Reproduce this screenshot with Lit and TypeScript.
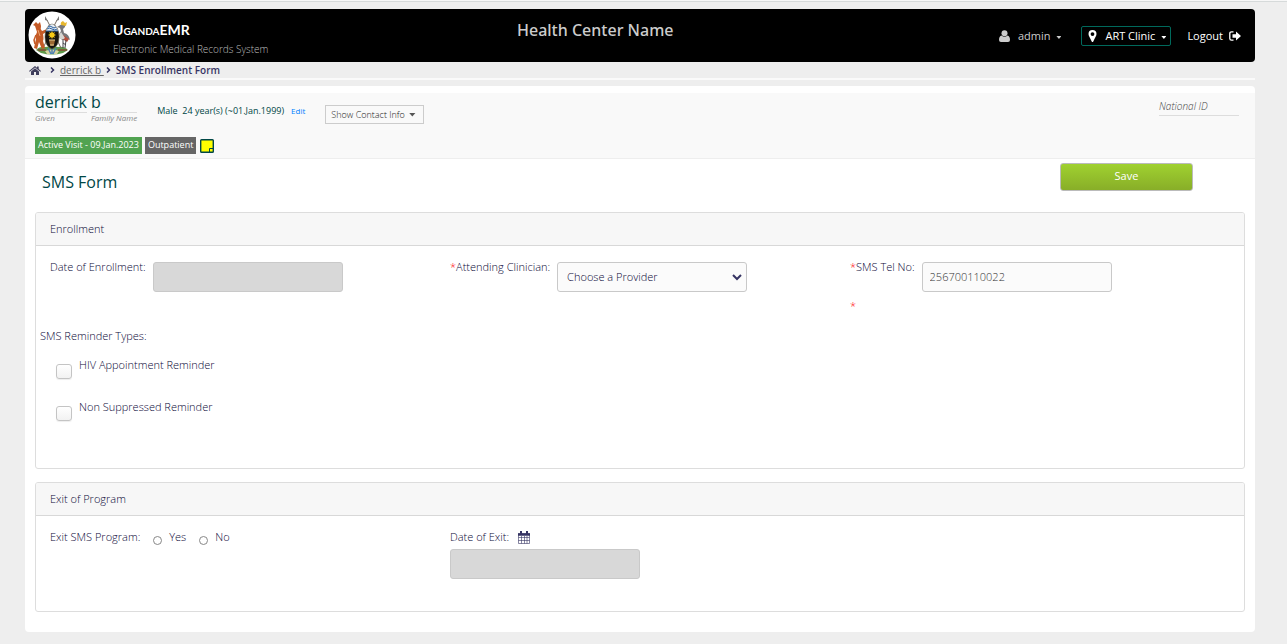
import { LitElement, html, css, svg } from "lit";
import { customElement, property } from "lit/decorators.js";

const coatOfArms = svg`
  <circle cx="24" cy="24" r="23.5" fill="#fff"/>
  <path d="M8 39q4-4 10-3 6-2 12 0 6-1 10 3l-5 3q-11 3-22 0z" fill="#5f9a4a"/>
  <path d="M17 40q7-3 14 0l-2 3H19z" fill="#d9d4a0"/>
  <path d="M20 37l3 6M24 36v7M28 37l-3 6" stroke="#4f80b4" stroke-width="1.5"/>
  <path d="M10 39h8M30 39h9" stroke="#8b4a35" stroke-width="1.5"/>
  <path d="M15 37L29 9M33 37L19 9" stroke="#776b60" stroke-width="1"/>
  <path d="M17 5l3 5-3-1zM31 5l-3 5 3-1z" fill="#777"/>
  <path d="M8 11l2 2 2-2 1 4q-1 3 1 5l5-2 1 2-5 3q1 5 0 7l2 7-3 1-3-7-2 7-3-1 2-9q-1-4 1-7l-2-6-2-1z" fill="#c55b27"/>
  <path d="M8 24l-2 5 1 4" stroke="#c55b27" stroke-width="1.5" fill="none"/>
  <path d="M10 19l2 6" stroke="#eba16b" stroke-width="1"/>
  <path d="M34 13q4-1 3 3l-2 2 1 4q5 1 6 7l-4-2-4 2-4-4 3-5-1-3-3-1z" fill="#77777a"/>
  <path d="M33 14q-1-3 2-4l2 2 2-1-1 4" fill="#e7b72e"/>
  <path d="M35 24l6 4-2 3-6-4z" fill="#b64d3a"/>
  <path d="M33 21l-3 5 4 3 3-2z" fill="#d5d5d1"/>
  <path d="M35 28v9M38 29l-1 8M35 32l3 2" stroke="#454348" stroke-width="1"/>
  <path d="M24 13q7 2 7 13 0 9-7 12-7-3-7-12 0-11 7-13z" fill="#16140f" stroke="#57503b" stroke-width=".6"/>
  <path d="M18 20q1-5 6-7 5 2 6 7z" fill="#e6edf4"/>
  <path d="M19 18q2-2 5 0t5 0M20 16q2-2 4 0t4 0M18 20h12" stroke="#295f9e" stroke-width="1" fill="none"/>
  <path d="M24 20l1 2 2-1-1 2 2 1-2 1 1 2-2-1-1 2-1-2-2 1 1-2-2-1 2-1-1-2 2 1z" fill="#f5c916"/>
  <path d="M21 29h6l-1 5q-2 2-4 0z" fill="#9b6831"/>
  <path d="M21 29h6M22 34h4" stroke="#e2c991" stroke-width="1"/>
`;

@customElement("form-panel")
class FormPanel extends LitElement {
  @property() heading = "";

  static styles = css`
    :host { display: block; border: 1px solid #ddd; border-radius: 3px; background: #fff; }
    .heading {
      margin: 0; padding: 0 14px; height: 32px; line-height: 32px;
      font-size: 11px; font-weight: inherit; background: #f7f7f7;
      border-bottom: 1px solid #d8d8d8; border-radius: 2px 2px 0 0;
    }
    .body { padding: 16px 4px 0; }
  `;

  render() {
    return html`<h2 class="heading">${this.heading}</h2><div class="body"><slot></slot></div>`;
  }
}

@customElement("app-root")
class AppRoot extends LitElement {
  static styles = css`
    * { box-sizing: border-box; }
    :host {
      display: block; min-height: 100vh; background: #eee;
      border-top: 1px solid #f7f7f7; box-sizing: border-box;
      font-family: "Open Sans", "Noto Sans", sans-serif;
      font-size: 11px; line-height: 14px; color: #363463;
    }
    a { color: inherit; text-decoration: none; }
    button, input, select { font: inherit; color: inherit; margin: 0; }
    svg { display: block; flex: none; }
    .page { border-top: 1px solid #d6dada; padding: 7px 32px 12px 25px; }

    .topbar {
      display: grid; grid-template-columns: 40% auto 1fr; height: 53px;
      background: #000; color: #fff; border-radius: 4px;
    }
    .brand { display: flex; gap: 37px; padding: 2px 3px; }
    .brand-text { padding-top: 10px; }
    .brand-name {
      margin: 0; font-family: Lato, sans-serif; font-size: 14px; line-height: 18px;
      font-weight: 700; font-variant: small-caps;
    }
    .tagline { margin: 0; padding-top: 3px; font-size: 10px; line-height: 14px; font-weight: 300; color: #bbb; }
    .facility { margin: 0; padding-top: 10px; font-size: 16px; line-height: 22px; font-weight: 500; font-family: "Noto Sans", sans-serif; color: #ccc; }
    .session { display: flex; justify-content: flex-end; align-items: center; padding-right: 14px; }
    .link-button { display: flex; align-items: center; gap: 8px; padding: 0; border: 0; background: none; color: #ccc; }
    .location {
      display: flex; align-items: center; gap: 8px; height: 20px; margin: 0 16px 0 20px;
      padding: 0 4px 0 6px; background: none; border: 1px solid #00695c; border-radius: 2px; color: #fff;
    }
    .caret { width: 5px; height: 3px; margin-top: 4px; background: currentColor; clip-path: polygon(0 0, 100% 0, 50% 100%); }
    .with-caret { display: flex; align-items: center; gap: 6px; }
    .logout { display: flex; align-items: center; gap: 6px; }

    .crumbs {
      display: flex; align-items: center; height: 18px; padding-left: 4px;
      font-size: 10px; border-bottom: 2px solid #fafafa;
    }
    .chevron { margin: 0 5px 0 9px; }
    .chevron.near { margin: 0 5px 0 2px; }
    .crumb-link { color: #666; text-decoration: underline; white-space: pre; }
    .current { font-weight: 600; }

    .content { margin-top: 6px; padding: 7px 0 20px; background: #fff; border-radius: 4px; }
    .patient { height: 66px; padding: 0 16px 0 10px; background: #f9f9f9; border-bottom: 1px solid #eee; color: #004746; }
    .identity { display: flex; align-items: flex-start; height: 44px; }
    .names { display: flex; gap: 4px; }
    .name { display: grid; font-size: 16px; line-height: 19px; }
    .name small { border-top: 1px solid #ddd; font-size: 8px; line-height: 9px; font-style: italic; color: #888; }
    .demographics { margin: 0 0 0 20px; padding-top: 11px; font-size: 9px; white-space: pre; }
    .edit { margin-left: 7px; padding-top: 11px; font-size: 8px; color: #007fff; }
    .contact {
      display: flex; align-items: center; gap: 4px; height: 19px; margin: 12px 0 0 20px; padding: 0 7px 0 5px;
      background: transparent; border: 1px solid #ccc; font-size: 9px; font-weight: 300; color: #222;
    }
    .contact .caret { width: 7px; height: 4px; margin: 0; background: #555; }
    .national { width: 80px; margin-left: auto; padding: 6px 0 2px; border-bottom: 1px solid #ddd; font-size: 10px; font-style: italic; font-weight: 300; color: #444; }
    .badges { display: flex; gap: 3px; align-items: center; }
    .badge { height: 17px; padding: 0 3px; line-height: 16px; font-size: 9px; color: #fff; background: #666; }
    .badge.active { background: #51a351; }
    .note { margin-left: 1px; padding: 0; border: 0; background: none; }

    .title-row { display: flex; justify-content: space-between; align-items: flex-start; height: 53px; padding: 4px 62px 0 17px; }
    .title { margin: 0; padding-top: 8px; font-size: 16px; line-height: 22px; font-weight: 400; color: #004746; }
    .save {
      width: 133px; height: 28px; padding: 0 0 2px; border: 1px solid #bbb; border-radius: 3px;
      background: linear-gradient(#a0d130, #88ae28); color: #fff; font-weight: 500;
    }
    .panels { display: grid; gap: 13px; padding: 0 10px; font-weight: 300; color: #0b0838; }
    .enrollment { min-height: 257px; }
    .exit { min-height: 130px; }
    .columns { display: grid; grid-template-columns: repeat(3, 1fr); }
    .field { display: flex; align-items: flex-start; gap: 7px; padding: 0 10px; }
    .field label, .field .label { line-height: 10px; white-space: nowrap; }
    .required { color: #f00; }
    .missing { margin: 0; padding: 7px 10px 0; line-height: 14px; color: #f00; }
    .control { width: 190px; height: 30px; padding: 0 7px; border: 1px solid #c9c9c9; border-radius: 3px; background: #fbfbfb; }
    .control:disabled { background: #d8d8d8; }
    .phone { padding-bottom: 1px; color: #333; }
    .select { position: relative; }
    .select select { appearance: none; padding: 0 20px 0 9px; display: block; }
    .select svg { position: absolute; right: 4px; top: 11px; pointer-events: none; }
    .group { margin: 0; padding: 16px 0 0; border: 0; min-width: 0; }
    .group legend { padding: 0; float: left; width: 100%; line-height: 14px; }
    .options { display: grid; gap: 26px; clear: both; padding: 15px 0 0 16px; }
    .option { display: flex; gap: 7px; height: 16px; }
    .option label { line-height: 14px; }
    .option input {
      appearance: none; width: 16px; height: 15px; margin-top: 6px; flex: none; border: 1px solid #c4c4c4; border-radius: 3px;
      background: linear-gradient(#fff, #f2f2f2); box-shadow: 0 1px 1px #eee;
    }
    .option input:checked { background: #363463; }
    .radios { display: flex; align-items: flex-start; margin-left: 6px; gap: 13px; }
    .radio { display: flex; gap: 7px; }
    .radio input { appearance: none; width: 9px; height: 9px; margin-top: 4px; border: 1px solid #888; border-radius: 50%; background: #fff; }
    .radio input:checked { background: #363463; }
    .date-exit { display: grid; gap: 7px; padding: 0 10px; justify-items: start; }
    .date-label { display: flex; align-items: center; gap: 9px; height: 10px; }
  `;

  private chevron(near = false) {
    return html`<svg class="chevron ${near ? "near" : ""}" width="5" height="8" viewBox="0 0 5 8" fill="none" stroke="#363463" stroke-width="1.5"><path d="M1 1.5l2.500 2.500L1 6.500"/></svg>`;
  }

  render() {
    return html`
      <div class="page">
        <header class="topbar">
          <div class="brand">
            <svg width="48" height="48" viewBox="0 0 48 48" role="img" aria-label="Coat of arms">${coatOfArms}</svg>
            <div class="brand-text">
              <h1 class="brand-name">UgandaEMR</h1>
              <p class="tagline">Electronic Medical Records System</p>
            </div>
          </div>
          <p class="facility">Health Center Name</p>
          <nav class="session">
            <button class="link-button">
              <svg width="11" height="12" viewBox="0 0 11 12" fill="#ccc"><circle cx="5.5" cy="3.2" r="3"/><path d="M2.5 5.5q3 2.4 6 0 2.5.7 2.5 4.5 0 2-2 2H2q-2 0-2-2 0-3.8 2.5-4.5z"/></svg>
              <span class="with-caret">admin <i class="caret"></i></span>
            </button>
            <button class="location">
              <svg width="9" height="12" viewBox="0 0 9 12" fill="#fff"><path fill-rule="evenodd" d="M4.5 0a4 4 0 0 1 4 4c0 2-1.600 3.500-3.200 7.400q-.8 1.200-1.600 0C2.100 7.500.5 6 .5 4a4 4 0 0 1 4-4zm0 2.200a1.900 1.900 0 1 0 0 3.800 1.900 1.900 0 0 0 0-3.800z"/></svg>
              <span class="with-caret">ART Clinic <i class="caret"></i></span>
            </button>
            <a class="logout" href="#">Logout
              <svg width="12" height="10" viewBox="0 0 12 10"><path d="M4.500 .8H2.500Q.8.8.8 2.500v5q0 1.700 1.700 1.700h2" fill="none" stroke="#fff" stroke-width="1.300"/><path d="M3.500 3.200H7V.6L12 5 7 9.400V6.800H3.500z" fill="#fff"/></svg>
            </a>
          </nav>
        </header>

        <nav class="crumbs" aria-label="Breadcrumb">
          <a href="#" aria-label="Home">
            <svg width="12" height="9" viewBox="0 0 12 9" fill="#3f3e5c"><path d="M6 0l2 1.700V.5h1.700v2.600L12 5l-.7.8L6 1.400.7 5.800 0 5z"/><path d="M6 2.200l4 3.300V9H7V6H5v3H2V5.500z"/></svg>
          </a>
          ${this.chevron()}
          <a class="crumb-link" href="#">derrick b </a>
          ${this.chevron(true)}
          <span class="current">SMS Enrollment Form</span>
        </nav>

        <main class="content">
          <section class="patient">
            <div class="identity">
              <div class="names">
                <span class="name">derrick<small>Given</small></span>
                <span class="name">b<small>Family Name</small></span>
              </div>
              <p class="demographics">Male  24 year(s) (~01.Jan.1999)</p>
              <a class="edit" href="#">Edit</a>
              <button class="contact">Show Contact Info <i class="caret"></i></button>
              <span class="national">National ID</span>
            </div>
            <div class="badges">
              <span class="badge active">Active Visit - 09.Jan.2023</span>
              <span class="badge">Outpatient</span>
              <button class="note" aria-label="Sticky note">
                <svg width="14" height="14" viewBox="0 0 14 14"><path d="M1.500 .7h11q.8 0 .8.8v11q0 .8-.8.800h-11q-.8 0-.8-.8v-11q0-.8.8-.8z" fill="#ff0" stroke="#004746" stroke-width="1.400"/><path d="M9.500 13V9.500H13" fill="none" stroke="#004746"/></svg>
              </button>
            </div>
          </section>

          <form @submit=${(e: Event) => e.preventDefault()}>
            <div class="title-row">
              <h2 class="title">SMS Form</h2>
              <button class="save" type="submit">Save</button>
            </div>
            <div class="panels">
              <form-panel class="enrollment" heading="Enrollment">
                <div class="columns">
                  <div class="field">
                    <label for="enrolled">Date of Enrollment:</label>
                    <input class="control" id="enrolled" type="text" disabled>
                  </div>
                  <div class="field">
                    <label for="provider"><span class="required">*</span>Attending Clinician:</label>
                    <div class="select">
                      <select class="control" id="provider"><option>Choose a Provider</option></select>
                      <svg width="12" height="9" viewBox="0 0 12 9" fill="none" stroke="#363463" stroke-width="2"><path d="M2 2l4 4 4-4"/></svg>
                    </div>
                  </div>
                  <div>
                    <div class="field">
                      <label for="phone"><span class="required">*</span>SMS Tel No:</label>
                      <input class="control phone" id="phone" type="tel" value="256700110022">
                    </div>
                    <p class="missing">*</p>
                  </div>
                </div>
                <fieldset class="group">
                  <legend>SMS Reminder Types:</legend>
                  <div class="options">
                    <div class="option"><input id="hiv" type="checkbox"><label for="hiv">HIV Appointment Reminder</label></div>
                    <div class="option"><input id="non" type="checkbox"><label for="non">Non Suppressed Reminder</label></div>
                  </div>
                </fieldset>
              </form-panel>

              <form-panel class="exit" heading="Exit of Program">
                <div class="columns">
                  <div class="field" role="radiogroup" aria-labelledby="exit-label">
                    <span class="label" id="exit-label">Exit SMS Program:</span>
                    <div class="radios">
                      <div class="radio"><input id="yes" type="radio" name="exit"><label for="yes">Yes</label></div>
                      <div class="radio"><input id="no" type="radio" name="exit"><label for="no">No</label></div>
                    </div>
                  </div>
                  <div class="date-exit">
                    <div class="date-label">
                      <label for="exit-date">Date of Exit:</label>
                      <svg width="12" height="13" viewBox="0 0 12 13" fill="none" stroke="#363463"><path d="M.5 2.500h11v10H.5zM.5 6.500h11M.5 9.500h11M3.500 5v7.500M6.500 5v7.500M9 5v7.500" stroke-width=".6"/><path d="M0 3.500h12" stroke-width="2.500"/><path d="M3 0v3M9 0v3" stroke-width="2"/></svg>
                    </div>
                    <input class="control" id="exit-date" type="text" disabled>
                  </div>
                </div>
              </form-panel>
            </div>
          </form>
        </main>
      </div>
    `;
  }
}
